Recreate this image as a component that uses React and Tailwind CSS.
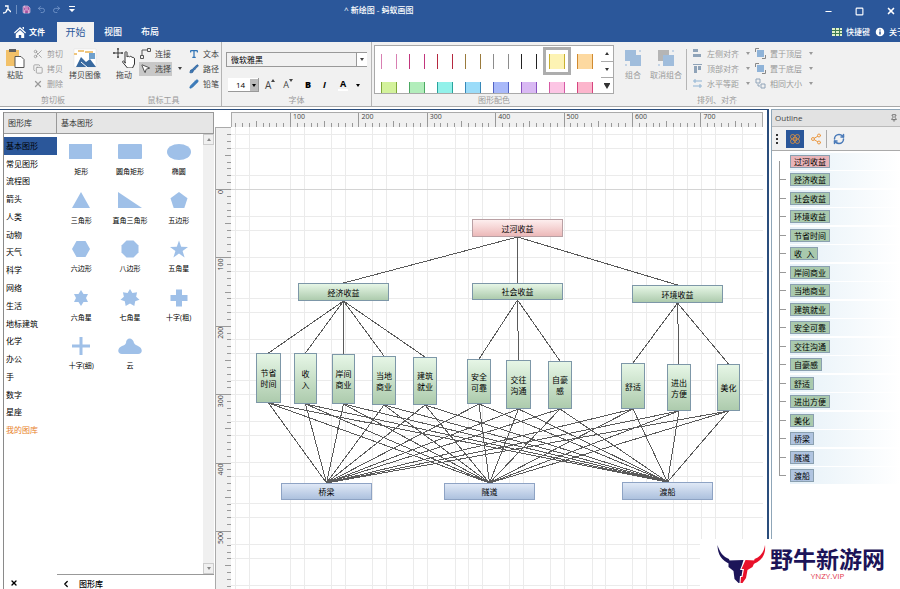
import { useState } from 'react';
import clsx from 'clsx';
import {
  Undo2, Redo2, Save, Scissors, Copy, X, Minus, Square, Info, Type,
  Brush, Pencil, MousePointer2, RefreshCw, Share2, Pin, Flower, ChevronLeft
} from 'lucide-react';

const categories = [
  '基本图形', '常见图形', '流程图', '箭头', '人类', '动物', '天气', '科学', '网络',
  '生活', '地标建筑', '化学', '办公', '手', '数字', '星座', '我的图库',
];

const shapes = [
  { label: '矩形', draw: <rect x="0" y="4" width="23" height="15" /> },
  { label: '圆角矩形', draw: <rect x="0" y="4" width="24" height="15" rx="1" /> },
  { label: '椭圆', draw: <ellipse cx="12" cy="12" rx="12" ry="8" /> },
  { label: '三角形', draw: <path d="M12 3 21 19H3z" /> },
  { label: '直角三角形', draw: <path d="M0 3 24 19H0z" /> },
  { label: '五边形', draw: <path d="M12 3 20.500 9.200 17.300 19H6.700L3.500 9.200z" /> },
  { label: '六边形', draw: <path d="M7.500 4h9L21 12l-4.500 8h-9L3 12z" /> },
  { label: '八边形', draw: <path d="M8.500 3.500h7l5 5v7l-5 5h-7l-5-5v-7z" /> },
  { label: '五角星', draw: <path d="m12 3.500 2.200 6.300 6.800.1-5.400 4 2 6.600-5.600-3.900-5.600 3.900 2-6.600-5.400-4 6.800-.1z" /> },
  { label: '六角星', draw: <path d="m12 4 2.500 4H19l-2 4 2 4h-4.500L12 20l-2.500-4H5l2-4-2-4h4.500z" /> },
  { label: '七角星', draw: <path d="m12 3 2.400 4 4.700-.8-1 4.500 3.400 3.100-4.300 1.500-.9 4.600L12 17.500l-4.300 2.400-.9-4.600-4.300-1.500 3.400-3.100-1-4.500 4.700.8z" /> },
  { label: '十字(粗)', draw: <path d="M9 3.500h6V9h5.500v6H15v5.500H9V15H3.500V9H9z" /> },
  { label: '十字(细)', draw: <path d="M10.500 3h3v7.500H21v3h-7.500V21h-3v-7.500H3v-3h7.500z" /> },
  { label: '云', draw: <path d="M4 20c-5 0-5-6 0-8 2-1 3-1 4-3 0-6 7-6 8 0 1 2 3 2 4 3 5 2 5 8 0 8z" /> },
];

const outline = [
  ['过河收益', 'red'], ['经济收益', 'green'], ['社会收益', 'green'], ['环境收益', 'green'],
  ['节省时间', 'green'], ['收  入', 'green'], ['岸间商业', 'green'], ['当地商业', 'green'],
  ['建筑就业', 'green'], ['安全可靠', 'green'], ['交往沟通', 'green'], ['自豪感', 'green'],
  ['舒适', 'green'], ['进出方便', 'green'], ['美化', 'green'], ['桥梁', 'blue'],
  ['隧道', 'blue'], ['渡船', 'blue'],
];

const outlineTone = { red: 'bg-[#e8b4b8]', green: 'bg-[#a9c9ad]', blue: 'bg-[#b0c4e0]' };

const nodeTone = {
  red: 'from-[#fdeeee] to-[#ecb9b9] border-[#b9a0a4]',
  green: 'from-[#e6f6e6] to-[#adcbad] border-[#7d97a8]',
  blue: 'from-[#dfe8f6] to-[#adc1de] border-[#8ea3c4]',
};

// canvas coordinates: x, y, width, height
const root = { lines: ['过河收益'], tone: 'red', x: 241, y: 92, w: 91, h: 18 };

const benefits = [
  { lines: ['经济收益'], tone: 'green', x: 67, y: 156, w: 91, h: 18, kids: [0, 5] },
  { lines: ['社会收益'], tone: 'green', x: 241, y: 156, w: 91, h: 17, kids: [5, 8] },
  { lines: ['环境收益'], tone: 'green', x: 401, y: 158, w: 91, h: 18, kids: [8, 11] },
];

const factors = [
  { lines: ['节省', '时间'], tone: 'green', x: 25, y: 226, w: 25, h: 50 },
  { lines: ['收', '入'], tone: 'green', x: 63, y: 226, w: 23, h: 51 },
  { lines: ['岸间', '商业'], tone: 'green', x: 101, y: 227, w: 23, h: 50 },
  { lines: ['当地', '商业'], tone: 'green', x: 141, y: 229, w: 24, h: 49 },
  { lines: ['建筑', '就业'], tone: 'green', x: 182, y: 230, w: 24, h: 48 },
  { lines: ['安全', '可靠'], tone: 'green', x: 236, y: 232, w: 24, h: 45 },
  { lines: ['交往', '沟通'], tone: 'green', x: 275, y: 233, w: 25, h: 49 },
  { lines: ['自豪', '感'], tone: 'green', x: 317, y: 234, w: 24, h: 48 },
  { lines: ['舒适'], tone: 'green', x: 390, y: 236, w: 24, h: 46 },
  { lines: ['进出', '方便'], tone: 'green', x: 436, y: 237, w: 24, h: 47 },
  { lines: ['美化'], tone: 'green', x: 486, y: 237, w: 23, h: 47 },
];

const options = [
  { lines: ['桥梁'], tone: 'blue', x: 50, y: 356, w: 91, h: 17 },
  { lines: ['隧道'], tone: 'blue', x: 213, y: 356, w: 91, h: 17 },
  { lines: ['渡船'], tone: 'blue', x: 391, y: 355, w: 91, h: 18 },
];

const edges = [
  ...benefits.map(b => [root, b]),
  ...benefits.flatMap(b => factors.slice(...b.kids).map(f => [b, f])),
  ...factors.flatMap(f => options.map(o => [f, o])),
];

const gridX = [
  4, 18, 59, 73, 100, 114, 141, 155, 182, 196, 224, 237, 251, 278, 292, 319, 333, 361,
  374, 401, 415, 442, 456, 470, 484, 511,
];
const gridY = Array.from({ length: 24 }, (_, i) => 7 + Math.floor(i / 2) * 41 + (i % 2) * 14);

const swatches = [
  'bg-white border-[#d87fb2]', 'bg-white border-[#c2357c]', 'bg-white border-[#b5283f]',
  'bg-white border-[#9a7a3c]', 'bg-white border-[#8c8c8c]', 'bg-white border-[#222222]',
  'bg-[#fdf3b4] border-[#c8b030]', 'bg-[#fdd9a0] border-[#d08a30]',
  'bg-[#d3f29c] border-[#7fa83a]', 'bg-[#b2edbb] border-[#4ba862]',
  'bg-[#92f1ea] border-[#2aa39c]', 'bg-[#9bdcf9] border-[#3788b8]',
  'bg-[#a9b9f9] border-[#5263c4]', 'bg-[#d9b9f3] border-[#8a52c0]',
  'bg-[#fcc5e4] border-[#d65aa4]', 'bg-[#fcb5cc] border-[#d6457f]',
];

const Caret = ({ className }) => (
  <svg viewBox="0 0 4 3" className={clsx('w-1 h-[3px] shrink-0', className)} fill="currentColor">
    <path d="M0 0h4L2 3z" />
  </svg>
);

const Group = ({ label, className, children }) => (
  <section className={clsx('flex flex-col shrink-0', className)}>
    <div className="flex items-start h-[52px]">{children}</div>
    <div className="h-3 leading-3 text-center text-[#999]">{label}</div>
  </section>
);

const BigButton = ({ label, className, children }) => (
  <button className={clsx('flex flex-col items-center gap-0.5 pt-1.5 whitespace-nowrap leading-[10px]', className)}>
    <svg viewBox="0 0 24 20" className="w-6 h-5">{children}</svg>
    {label}
  </button>
);

const Row = ({ icon, label, caret, active, className }) => (
  <div className={clsx('flex items-center h-[15px]', className)}>
    <button className={clsx('flex items-center gap-1 h-[14px] px-px whitespace-nowrap', active && 'bg-[#c8c8c8]')}>
      {icon}
      {label}
    </button>
    {caret && <Caret className="ml-1.5" />}
  </div>
);

const AlignIcon = ({ children }) => (
  <svg viewBox="0 0 11 11" className="w-[11px] h-[11px]">{children}</svg>
);

const TitleBar = () => (
  <header className="bg-[#2b579a] text-white">
    <div className="grid grid-cols-3 items-center h-[22px]">
      <div className="flex items-center pl-[3px] pb-1">
        <svg viewBox="0 0 8 9" className="w-2 h-[9px]" fill="none" stroke="white" strokeWidth="1.300">
          <path d="M0 8c3 0 4-2 4-4M2 1h3v3l3 3M5 4 3 6" />
        </svg>
        <span className="w-px h-[9px] mx-[5px] bg-[#6f8fc0]" />
        <button aria-label="保存"><Save className="w-[9px] h-[9px] text-[#f3d3ec]" fill="#a653a0" /></button>
        <button aria-label="撤销" className="ml-1.5"><Undo2 className="w-[9px] h-[9px] text-[#7f9fd0]" /></button>
        <button aria-label="重做" className="ml-1.5"><Redo2 className="w-[9px] h-[9px] text-[#7f9fd0]" /></button>
        <button aria-label="更多" className="ml-2">
          <svg viewBox="0 0 6 6" className="w-1.5 h-1.5" fill="white"><path d="M0 0h6v1H0zM0 3h6L3 6z" /></svg>
        </button>
      </div>
      <h1 className="pl-11 pb-0.5 font-medium whitespace-pre">^ 新绘图 - 蚂蚁画图</h1>
      <div className="flex justify-end items-center gap-[22px] pr-1">
        <button aria-label="最小化"><Minus className="w-[9px] h-[9px]" strokeWidth={3} /></button>
        <button aria-label="最大化"><Square className="w-[9px] h-[9px]" strokeWidth={3} /></button>
        <button aria-label="关闭"><X className="w-[10px] h-[10px]" strokeWidth={4} /></button>
      </div>
    </div>
    <div className="flex items-stretch h-5">
      <nav className="flex items-stretch">
        <button className="flex items-center gap-[3px] w-[57px] pl-[14px] font-bold">
          <svg viewBox="0 0 12 11" className="w-3 h-[11px]" fill="white">
            <path d="M6 0 12 5.500l-.8.9L6 1.800.8 6.400 0 5.500zM8.500 0H10v2.500L8.500 1.200z" />
            <path d="M6 3 10.200 6.700V11H7.200V8H4.800v3h-3V6.700z" />
          </svg>
          文件
        </button>
        <button className="w-[37px] bg-[#f1f1f1] text-[#2b579a] text-[10px]">开始</button>
        <button className="w-[38px] text-[9px] font-medium">视图</button>
        <button className="w-9 text-[9px] font-medium">布局</button>
      </nav>
      <div className="ml-auto flex items-center font-medium whitespace-nowrap">
        <button className="flex items-center gap-1">
          <svg viewBox="0 0 10 8" className="w-[10px] h-2">
            <path fill="#dff0c8" d="M0 0h10v8H0z" />
            <path stroke="#3c7a50" d="M0 2.500h10M0 5.500h10M3.500 0v8M7.500 0v8" />
          </svg>
          快捷键
        </button>
        <button className="flex items-center gap-[3px] ml-1 w-[26px] overflow-hidden">
          <Info className="w-3 h-3 shrink-0 text-[#2b579a]" fill="white" strokeWidth={3} />关于
        </button>
      </div>
    </div>
  </header>
);

const Ribbon = () => (
  <div className="flex h-[65px] bg-[#f1f1f1] border-b border-[#a8a8a8] text-[#444]">
    <Group label="剪切板" className="w-[106px]">
      <BigButton label="粘贴" className="w-[30px]">
        <path fill="#f2c169" d="M3 2h13v16H3z" />
        <path fill="#5f5f5f" d="M6 1h7v3H6z" />
        <path fill="white" stroke="#555" d="M12 8.500h6l3 3v8h-9z" />
      </BigButton>
      <div className="pt-1 ml-0.5 text-[#9a9a9a]">
        <Row icon={<Scissors className="w-[10px] h-[10px]" />} label="剪切" />
        <Row icon={<Copy className="w-[10px] h-[10px]" />} label="拷贝" />
        <Row icon={<X className="w-[10px] h-[10px]" strokeWidth={3} />} label="删除" />
      </div>
      <BigButton label="拷贝图像" className="ml-[5px]">
        <path fill="white" stroke="#ddd" strokeWidth=".5" d="M1 1h22v18H1z" />
        <path fill="#efc67e" d="M5 2h6v2H5zM12 3h8v2h-8zM1 5h3v2H1z" />
        <path fill="#38699f" d="m3 19 5-10 5 5 4-3 6 8z" />
        <path fill="#6fa0cc" d="M16 5h6v6h-6z" />
        <path stroke="white" d="m8 14 7 6" />
      </BigButton>
    </Group>

    <Group label="鼠标工具" className="w-[116px] border-r border-[#b5b5b5]">
      <BigButton label="拖动" className="ml-1.5">
        <g fill="none" stroke="#333">
          <path d="M6 0v10M1 5h10M5 1h2M5 9h2M2 4v2M10 4v2" />
          <path fill="white" d="M13 15V4.500c0-1 2-1 2 0V9c1-1 2-1 2.500 0 1-1 2-1 2.500.5 1-.5 2.500 0 2.500 1.500v5l-2 4h-5l-5-6c0-1 1-2 3 1z" />
        </g>
      </BigButton>
      <div className="pt-1 ml-[3px]">
        <Row label="连接" icon={<AlignIcon><path fill="none" stroke="#555" d="M.5 7.500h3v3h-3zM7.500.5h3v3h-3zM2 7V2h5" /></AlignIcon>} />
        <Row label="选择" active caret icon={<MousePointer2 className="w-[11px] h-[11px]" fill="white" />} />
      </div>
      <div className="pt-1 ml-1.5">
        <Row icon={<Type className="w-[10px] h-[10px] text-[#2f73b5]" strokeWidth={3} />} label="文本" />
        <Row icon={<Brush className="w-[10px] h-[10px] text-[#2f5f95]" fill="#3f7cba" />} label="路径" />
        <Row icon={<Pencil className="w-[10px] h-[10px] text-[#2f73b5]" fill="#3f7cba" />} label="铅笔" />
      </div>
    </Group>

    <Group label="字体" className="w-[150px] border-r border-[#b5b5b5]">
      <div className="flex-1 pt-2.5 px-1">
        <div className="relative flex items-center">
          <select aria-label="字体" className="appearance-none w-full h-[15px] pl-1 border border-[#999] bg-[#f1f1f1] text-black">
            <option>微软雅黑</option>
          </select>
          <span className="absolute right-0 flex items-center justify-center w-[11px] h-[13px] bg-white border-l border-[#999] pointer-events-none"><Caret /></span>
        </div>
        <div className="flex items-center mt-2.5 h-4 text-black">
          <div className="relative flex items-center ml-0.5">
            <select aria-label="字号" className="appearance-none w-[31px] h-[14px] pl-2 bg-white border-b border-r border-[#999]">
              <option>14</option>
            </select>
            <span className="absolute right-px flex items-center justify-center w-2 h-[12px] bg-[#bbb] pointer-events-none"><Caret /></span>
          </div>
          <button aria-label="增大字号" className="flex ml-1.5 text-[10px] text-[#444]">A<Caret className="rotate-180" /></button>
          <button aria-label="减小字号" className="flex ml-2 text-[9px] text-[#444]">A<Caret /></button>
          <button aria-label="粗体" className="ml-3 text-[9px] font-black">B</button>
          <button aria-label="斜体" className="ml-3 text-[9px] font-bold italic">I</button>
          <button aria-label="字体颜色" className="ml-3 text-[9px] font-bold leading-[10px] border-b-2 border-white px-0.5">A</button>
          <Caret className="ml-2" />
        </div>
      </div>
    </Group>

    <Group label="图形配色" className="w-[244px]">
      <div className="flex h-[49px] mt-[3px] ml-0.5 border border-[#a9a9a9] bg-white overflow-hidden">
        <div className="grid grid-cols-8 auto-rows-[28px] pt-px">
          {swatches.map((tone, i) => (
            <button
              key={tone}
              aria-label={`配色 ${i + 1}`}
              className={clsx('flex items-center justify-center w-7', i === 6 && 'border-[3px] border-[#adadad]')}
            >
              <span className={clsx('w-4 h-[15px] border-x shrink-0', tone)} />
            </button>
          ))}
        </div>
        <div className="flex flex-col ml-0.5 w-3 divide-y divide-[#aaa] text-[#333]">
          <button aria-label="上一行" className="flex flex-1 items-center justify-center"><Caret className="rotate-180" /></button>
          <button aria-label="下一行" className="flex flex-1 items-center justify-center"><Caret /></button>
          <button aria-label="展开" className="flex flex-1 items-center justify-center">
            <svg viewBox="0 0 6 6" className="w-1.5 h-1.5" fill="currentColor"><path d="M0 0h6v1L3 6 0 1z" /></svg>
          </button>
        </div>
      </div>
    </Group>

    <Group label="排列、对齐" className="w-[202px] text-[#9a9a9a]">
      <BigButton label="组合" className="ml-[5px]">
        <path fill="#a0bddc" d="M4 2h11v5h5v11H9v-5H4z" />
        <path fill="#c4d4e6" d="M18 2h2v2h-2zM4 16h2v2H4z" />
      </BigButton>
      <BigButton label="取消组合" className="ml-[5px]">
        <path fill="#b5b5b5" d="M4 2h11v11H4z" />
        <path fill="#a0bddc" d="M9 7h11v11H9z" />
        <path fill="#c4d4e6" d="M18 2h2v2h-2zM4 16h2v2H4z" />
      </BigButton>
      <div className="w-px h-[41px] mt-[7px] ml-1 bg-[#b5b5b5]" />
      <div className="pt-1 ml-1">
        <Row label="左侧对齐" caret icon={<AlignIcon><path fill="#8fa3b8" d="M1 1h5v3H1zM1 6h8v3H1z" /></AlignIcon>} />
        <Row label="顶部对齐" caret icon={<AlignIcon><path fill="#8fa3b8" d="M1 1h9v1H1zM2 3h3v7H2zM6 3h3v4H6z" /></AlignIcon>} />
        <Row label="水平等距" caret icon={<AlignIcon><path fill="none" stroke="#8fb3d3" d="M1 3h9M1 8h9M3 1v4M8 6v4" /></AlignIcon>} />
      </div>
      <div className="pt-1 ml-1">
        <Row label="置于顶层" caret icon={<AlignIcon><path fill="#8fb3d8" d="M2 2h7v7H2z" /><path fill="none" stroke="#888" d="M.500 4V.500H4M7 10.500h3.500V7" /></AlignIcon>} />
        <Row label="置于底层" caret icon={<AlignIcon><path fill="#8fb3d8" d="M2 2h7v7H2z" /><path fill="none" stroke="#888" d="M.500 4V.500H4M7 10.500h3.500V7" /></AlignIcon>} />
        <Row label="相同大小" caret icon={<AlignIcon><path fill="none" stroke="#8fa3b8" d="M1 1h4v4H1zM6 6h4v4H6zM3 6v2h2" /></AlignIcon>} />
      </div>
    </Group>
  </div>
);

const Library = () => {
  const [selected, setSelected] = useState('基本图形');

  return (
    <aside className="flex flex-col w-[211px] shrink-0 mt-0.5 ml-[3px] border-l border-[#8a8a8a] text-black">
      <div className="flex h-[22px] shrink-0 items-center bg-[#e6e6e6] border border-l-0 border-[#999] text-[#333]">
        <h2 className="w-[53px] pl-1 leading-5 border-r border-[#999]">图形库</h2>
        <h2 className="pl-1">基本图形</h2>
      </div>
      <div className="flex flex-1 min-h-0">
        <div className="flex flex-col w-[53px] pt-[3px]">
          <ul className="flex flex-col h-[302px] shrink-0">
            {categories.map(name => (
              <li key={name} className="flex flex-1">
                <button
                  onClick={() => setSelected(name)}
                  className={clsx(
                    'w-full pl-0.5 text-left whitespace-nowrap',
                    selected === name && 'bg-[#2b579a]',
                    name === '我的图库' && 'text-[#e8822a]'
                  )}
                >
                  {name}
                </button>
              </li>
            ))}
          </ul>
          <button aria-label="固定" className="mt-auto mb-0.5 ml-1.5 w-2"><X className="w-2 h-2" strokeWidth={4} /></button>
        </div>
        <div className="flex flex-col flex-1">
          <div className="flex flex-1 min-h-0">
            <div className="grid grid-cols-3 grid-rows-5 flex-1 h-[249px] pt-1.5 text-[7px]">
              {shapes.map(({ label, draw }) => (
                <button key={label} className="flex flex-col items-center gap-[3px] leading-[10px] whitespace-nowrap">
                  <svg viewBox="0 0 24 24" className="w-6 h-6" fill="#9fc0e8">{draw}</svg>
                  {label}
                </button>
              ))}
            </div>
            <div className="flex flex-col justify-between w-[11px] bg-[#f0f0f0] text-[#888]">
              <button aria-label="向上" className="flex items-center justify-center h-[11px] border border-[#ccc]"><Caret className="rotate-180" /></button>
              <button aria-label="向下" className="flex items-center justify-center h-[11px] border border-[#ccc]"><Caret /></button>
            </div>
          </div>
          <div className="flex items-center h-[15px] pl-1 pt-1 border-t border-[#999]">
            <button className="flex items-center gap-2 font-medium"><ChevronLeft className="w-[10px] h-[10px]" strokeWidth={3} />图形库</button>
          </div>
        </div>
      </div>
    </aside>
  );
};

const Node = ({ lines, tone, x, y, w, h }) => (
  <div
    className={clsx('absolute flex flex-col items-center justify-center border bg-linear-to-b leading-[11px] text-black', nodeTone[tone])}
    style={{ left: x, top: y, width: w, height: h }}
  >
    {lines.map(line => <span key={line}>{line}</span>)}
  </div>
);

const tickSize = i => (i % 10 === 0 ? 15 : i % 5 === 0 ? 6 : 4);

const Canvas = () => (
  <div className="flex flex-col flex-1 min-w-0 mt-0.5 ml-px mr-1">
    <div className="ml-4 h-[15px] shrink-0 bg-[#f0f0f0] border border-b-0 border-[#aaa] overflow-hidden">
      <svg className="w-full h-[14px]" fontSize="7" fill="#444">
        {Array.from({ length: 78 }, (_, i) => {
          const x = Math.round(59 + (i - 8) * 6.84) - 0.5;
          return <path key={i} stroke="#999" d={`M${x} 14v${-tickSize(i + 2)}`} />;
        })}
        {[100, 200, 300, 400, 500, 600, 700].map((n, i) => (
          <text key={n} x={61 + i * 68.4} y="6">{n}</text>
        ))}
      </svg>
    </div>
    <div className="flex flex-1 min-h-0">
      <div className="w-4 shrink-0 bg-[#f0f0f0] border-l border-t border-[#aaa] overflow-hidden">
        <svg className="w-[15px] h-full" fontSize="7" fill="#444">
          {Array.from({ length: 100 }, (_, i) => {
            const y = Math.round(61 + (i - 10) * 6.84) + 0.5;
            return <path key={i} stroke="#999" d={`M15 ${y}h${-tickSize(i)}`} />;
          })}
          {[0, 100, 200, 300, 400, 500].map((n, i) => (
            <text key={n} textAnchor="end" transform={`translate(7 ${62 + i * 68.4}) rotate(-90)`}>{n}</text>
          ))}
        </svg>
      </div>
      <div className="relative flex-1 bg-white overflow-hidden">
        <svg className="w-full h-full" shapeRendering="crispEdges">
          {gridX.map(x => <path key={x} stroke="#ebebeb" d={`M${x + 0.5} 0v2000`} />)}
          {gridY.map(y => <path key={y} stroke={y === 62 ? '#d4d4d4' : '#ebebeb'} d={`M0 ${y + 0.5}h3000`} />)}
          {edges.map(([a, b]) => (
            <path
              key={`${a.lines}-${b.lines}`}
              stroke="#5a5a5a"
              d={`M${a.x + a.w / 2} ${a.y + a.h}L${b.x + b.w / 2} ${b.y}`}
            />
          ))}
        </svg>
        {[root, ...benefits, ...factors, ...options].map(node => <Node key={node.lines.join('')} {...node} />)}
      </div>
    </div>
  </div>
);

const Outline = () => (
  <aside className="flex flex-col w-[129px] shrink-0 ml-0.5 border-l border-t border-[#8fa6b8] bg-white">
    <div className="flex items-center justify-between h-[17px] shrink-0 pl-[3px] pr-0.5 bg-[#e2e2e2] border-b border-[#bbb] text-[#444]">
      <h2>Outline</h2>
      <button aria-label="固定面板"><Pin className="w-2 h-2" /></button>
    </div>
    <div className="flex items-center h-6 shrink-0 pl-1 bg-[#f1f1f1] border-b border-[#aaa]">
      <svg viewBox="0 0 2 10" className="w-0.5 h-[10px]" fill="#333"><path d="M0 0h2v2H0zM0 4h2v2H0zM0 8h2v2H0z" /></svg>
      <button aria-label="思维导图" className="flex items-center justify-center w-[18px] h-[18px] ml-2 bg-[#2b579a]">
        <Flower className="w-3 h-3 text-[#c98a4b]" />
      </button>
      <button aria-label="树状图" className="ml-1.5"><Share2 className="w-3 h-3 text-[#ec9a45]" /></button>
      <span className="w-px h-[18px] ml-1 bg-[#aaa]" />
      <button aria-label="刷新" className="ml-1.5"><RefreshCw className="w-3 h-3 text-[#4a7ab8]" strokeWidth={3} /></button>
    </div>
    <div className="flex h-[333px] mt-px">
      <span className="w-px my-[9px] ml-[7px] bg-[#999]" />
      <ul className="flex flex-col flex-1">
        {outline.map(([name, tone], i) => (
          <li key={name} className="flex flex-1 items-center">
            <span className={clsx('w-1.5 h-px mr-1', i > 0 && 'bg-[#999]')} />
            <div className="flex flex-1 items-center h-[17px] bg-linear-to-r from-[#e6f1f8] to-white">
              <a href="#outline" className={clsx('h-[13px] px-[3px] leading-[11px] border border-[#8aa0b0] text-black whitespace-pre', outlineTone[tone])}>
                {name}
              </a>
            </div>
          </li>
        ))}
      </ul>
    </div>
  </aside>
);

const Watermark = () => (
  <div className="absolute right-0 bottom-0 flex items-center w-[200px] h-[50px] pl-4 bg-white">
    <svg viewBox="0 0 50 40" className="w-[51px] h-10 shrink-0">
      <g fill="#1c1458">
        <path d="M1 1c0 9 4 16 13 19l-1.500-5C7 13 3 8 1 1z" />
        <path d="M12 16.500 27 16l-1.500 5-2 5H26l-1 6h-1.500L23 39h-1l-4-4-1-8-5-4z" />
      </g>
      <g fill="#e8102a">
        <path d="M48.500 1c1 9-3 16-11.500 19l1-5c6-2 9.500-7 10.500-14z" />
        <path d="m29 16 10 .5-3 6.500-5 3-1.500 8-3.500 5h-2l.5-6H26l1.500-8H25z" />
      </g>
    </svg>
    <div className="flex flex-col items-center ml-[3px]">
      <span className="text-[23px] leading-6 font-bold text-[#1c1458] whitespace-nowrap">野牛新游网</span>
      <span className="text-[8px] leading-[10px] text-[#e23a4e]">YNZY.VIP</span>
    </div>
  </div>
);

export default function App() {
  return (
    <div className="relative flex flex-col h-screen overflow-hidden bg-white font-['Open_Sans','Noto_Sans_CJK_SC',sans-serif] text-[8px] leading-[12px]">
      <TitleBar />
      <Ribbon />
      <main className="flex flex-1 min-h-0 mt-0.5">
        <div className="flex flex-1 min-w-0 border-t border-r-2 border-[#2a4d7c]">
          <Library />
          <Canvas />
        </div>
        <Outline />
      </main>
      <Watermark />
    </div>
  );
}
